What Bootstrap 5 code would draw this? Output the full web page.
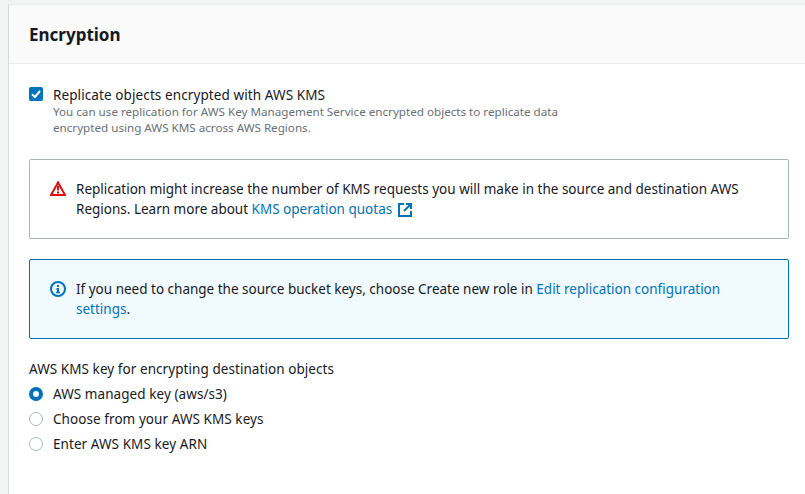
<!DOCTYPE html>
<html lang="en">

<head>
    <meta charset="UTF-8">
    <meta name="viewport" content="width=device-width, initial-scale=1.0">
    <title>Encryption</title>
    <link href="https://cdn.jsdelivr.net/npm/bootstrap@5.3.0/dist/css/bootstrap.min.css" rel="stylesheet">
    <style>
        html, body {
            height: 100%;
            overflow: hidden;
        }

        body {
            background-color: #f2f3f3;
            font-family: "Noto Sans", sans-serif;
            font-size: 13.5px;
            line-height: 20px;
            color: #16191f;
        }

        .panel-wrap {
            width: 801px;
            height: 490px;
            margin: 4px 0 0 8px;
            background-color: #fff;
            border-left: 1px solid #d5dbdb;
            border-top: 1px solid #eaeded;
        }

        .panel-head {
            height: 59px;
            padding: 0 20px;
            background-color: #fafafa;
            border-bottom: 1px solid #eaeded;
            font-size: 17px;
            font-weight: 700;
            line-height: 59px;
        }

        .panel-main {
            padding: 20px 20px 0 20px;
        }

        .tick-box {
            width: 14px;
            height: 14px;
            flex-shrink: 0;
            margin-top: 3px;
            border-radius: 2px;
            background-color: #0073bb;
        }

        .opt-gap {
            width: 10px;
            flex-shrink: 0;
        }

        .opt-title {
            padding-top: 1px;
            margin-bottom: -1px;
            letter-spacing: .1px;
        }

        .hint-text {
            font-size: 11.65px;
            line-height: 16px;
            color: #687078;
            width: 520px;
        }

        .note-box {
            height: 80px;
            padding: 19px 20px;
            border: 1px solid #aab7b8;
            border-radius: 2px;
            line-height: 20px;
        }

        .note-warn {
            margin-top: 23px;
        }

        .note-info {
            margin-top: 20px;
            border-color: #0073bb;
            background-color: #f1faff;
        }

        .note-box a, .note-box a:hover {
            color: #0073bb;
            text-decoration: none;
        }

        .note-icon {
            width: 16px;
            height: 20px;
            flex-shrink: 0;
            margin: 0 10px 0 0;
        }

        .link-icon {
            margin-left: 2px;
            vertical-align: -3px;
        }

        .key-label {
            margin-top: 20px;
            margin-bottom: 2px;
            letter-spacing: .065px;
        }

        .radio-row {
            height: 25px;
            letter-spacing: .07px;
        }

        .radio-dot {
            width: 14px;
            height: 14px;
            flex-shrink: 0;
            border-radius: 50%;
            border: 1px solid #aab7b8;
            background-color: #fff;
        }

        .radio-dot.is-on {
            border: 4px solid #0073bb;
        }
    </style>
</head>

<body>
    <div class="panel-wrap">
        <div class="panel-head">Encryption</div>
        <div class="panel-main">
            <div class="d-flex">
                <span class="tick-box d-flex">
                    <svg width="14" height="14" viewBox="0 0 14 14">
                        <path d="M3 7.2 L6 10 L11 4" fill="none" stroke="#fff" stroke-width="2"></path>
                    </svg>
                </span>
                <span class="opt-gap"></span>
                <div>
                    <div class="opt-title">Replicate objects encrypted with AWS KMS</div>
                    <div class="hint-text">You can use replication for AWS Key Management Service encrypted objects to replicate data encrypted using AWS KMS across AWS Regions.</div>
                </div>
            </div>

            <div class="note-box note-warn d-flex">
                <svg class="note-icon" viewBox="0 0 16 20">
                    <path d="M8 3.5 L15 16 H1 Z" fill="none" stroke="#df0f0f" stroke-width="2"></path>
                    <path d="M8 7 V11.5" stroke="#df0f0f" stroke-width="2"></path>
                    <path d="M8 12.5 V14.5" stroke="#df0f0f" stroke-width="2"></path>
                </svg>
                <div>Replication might increase the number of KMS requests you will make in the source and destination AWS Regions. Learn more about <a href="#">KMS operation quotas
                    <svg class="link-icon" width="14" height="14" viewBox="0 0 14 14">
                        <path d="M6 1 H1 V13 H13 V8" fill="none" stroke="#0073bb" stroke-width="2"></path>
                        <path d="M8 1 H13 V6" fill="none" stroke="#0073bb" stroke-width="2"></path>
                        <path d="M13 1 L6 8" fill="none" stroke="#0073bb" stroke-width="2"></path>
                    </svg></a></div>
            </div>

            <div class="note-box note-info d-flex">
                <svg class="note-icon" viewBox="0 0 16 20">
                    <circle cx="8" cy="10" r="7" fill="none" stroke="#0073bb" stroke-width="2"></circle>
                    <path d="M8 6 V8" stroke="#0073bb" stroke-width="2"></path>
                    <path d="M6.5 10 H8 V13.5" fill="none" stroke="#0073bb" stroke-width="2"></path>
                    <path d="M6 13.5 H10" stroke="#0073bb" stroke-width="1.5"></path>
                </svg>
                <div>If you need to change the source bucket keys, choose Create new role in <a href="#">Edit replication configuration settings</a>.</div>
            </div>

            <div class="key-label">AWS KMS key for encrypting destination objects</div>
            <div class="radio-row d-flex align-items-center"><span class="radio-dot is-on"></span><span class="opt-gap"></span>AWS managed key (aws/s3)</div>
            <div class="radio-row d-flex align-items-center"><span class="radio-dot"></span><span class="opt-gap"></span>Choose from your AWS KMS keys</div>
            <div class="radio-row d-flex align-items-center"><span class="radio-dot"></span><span class="opt-gap"></span>Enter AWS KMS key ARN</div>
        </div>
    </div>

    <script src="https://cdn.jsdelivr.net/npm/bootstrap@5.3.0/dist/js/bootstrap.bundle.min.js"></script>
</body>

</html>
